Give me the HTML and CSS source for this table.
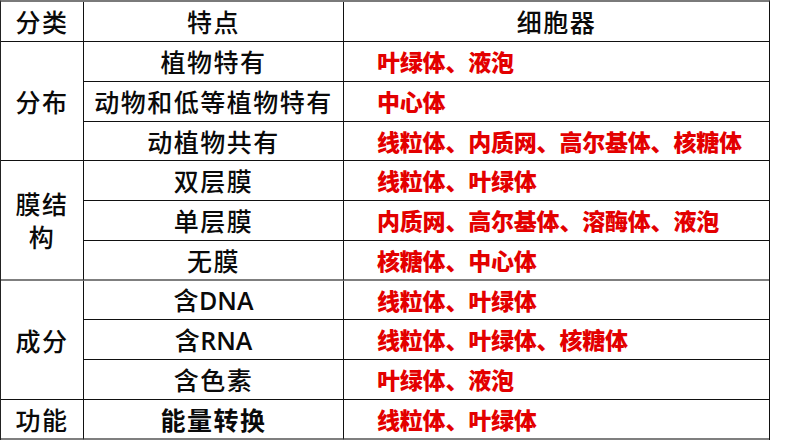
FILE: index.html
```html
<!DOCTYPE html>
<html lang="zh">
<head>
<meta charset="utf-8">
<link rel="stylesheet" href="styles.css">
</head>
<body>
<div class="table">
  <div class="c h c1">分类</div>
  <div class="c h c2">特点</div>
  <div class="c h c3">细胞器</div>

  <div class="c c1 span3 g1">分布</div>
  <div class="c c2">植物特有</div>
  <div class="c c3 r">叶绿体、液泡</div>
  <div class="c c2">动物和低等植物特有</div>
  <div class="c c3 r">中心体</div>
  <div class="c c2">动植物共有</div>
  <div class="c c3 r">线粒体、内质网、高尔基体、核糖体</div>

  <div class="c c1 span3 g2 gray multi">膜结<br>构</div>
  <div class="c c2">双层膜</div>
  <div class="c c3 r">线粒体、叶绿体</div>
  <div class="c c2">单层膜</div>
  <div class="c c3 r">内质网、高尔基体、溶酶体、液泡</div>
  <div class="c c2 gray">无膜</div>
  <div class="c c3 r gray">核糖体、中心体</div>

  <div class="c c1 span3 g3">成分</div>
  <div class="c c2"><span>含<span class="lat">DNA</span></span></div>
  <div class="c c3 r">线粒体、叶绿体</div>
  <div class="c c2"><span>含<span class="lat">RNA</span></span></div>
  <div class="c c3 r">线粒体、叶绿体、核糖体</div>
  <div class="c c2">含色素</div>
  <div class="c c3 r">叶绿体、液泡</div>

  <div class="c c1 last">功能</div>
  <div class="c c2 last b">能量转换</div>
  <div class="c c3 r last">线粒体、叶绿体</div>
</div>
</body>
</html>
```

FILE: styles.css
```css
html, body {
  margin: 0;
  padding: 0;
  background: #fff;
}
body {
  font-family: "Noto Sans CJK SC", "Noto Sans", sans-serif;
  color: #0a0a0a;
}
.table {
  display: grid;
  box-sizing: border-box;
  width: 770px;
  grid-template-columns: 83px 260px 425px;
  grid-template-rows: 40px 40px 40px 39px 40px 40px 40px 39px 40px 40px 40px;
  border-top: 2px solid #7a7a7a;
  border-left: 1px solid #222;
  border-right: 1px solid #111;
}
.c {
  box-sizing: border-box;
  border-bottom: 1px solid #111;
  border-right: 1px solid #111;
  display: flex;
  align-items: center;
  justify-content: center;
  font-size: 25px;
  font-weight: 500;
  letter-spacing: 1.5px;
  line-height: 1;
  white-space: nowrap;
}
.c3 { border-right: none; }
.c.r {
  justify-content: flex-start;
  padding-left: 33px;
  color: #e30000;
  font-weight: 900;
  font-size: 23px;
  letter-spacing: -0.2px;
}
.lat {
  letter-spacing: 0;
  font-family: "Open Sans", "Noto Sans", sans-serif;
  font-weight: 600;
  font-size: 25px;
  margin-left: -1px;
}
.span3 { grid-row: span 3; }
.multi {
  line-height: 33px;
  text-align: center;
}
.gray { border-bottom: 2px solid #7f7f7f; }
.last { border-bottom: 2px solid #7f7f7f; }
.b { font-weight: 700; }
```
